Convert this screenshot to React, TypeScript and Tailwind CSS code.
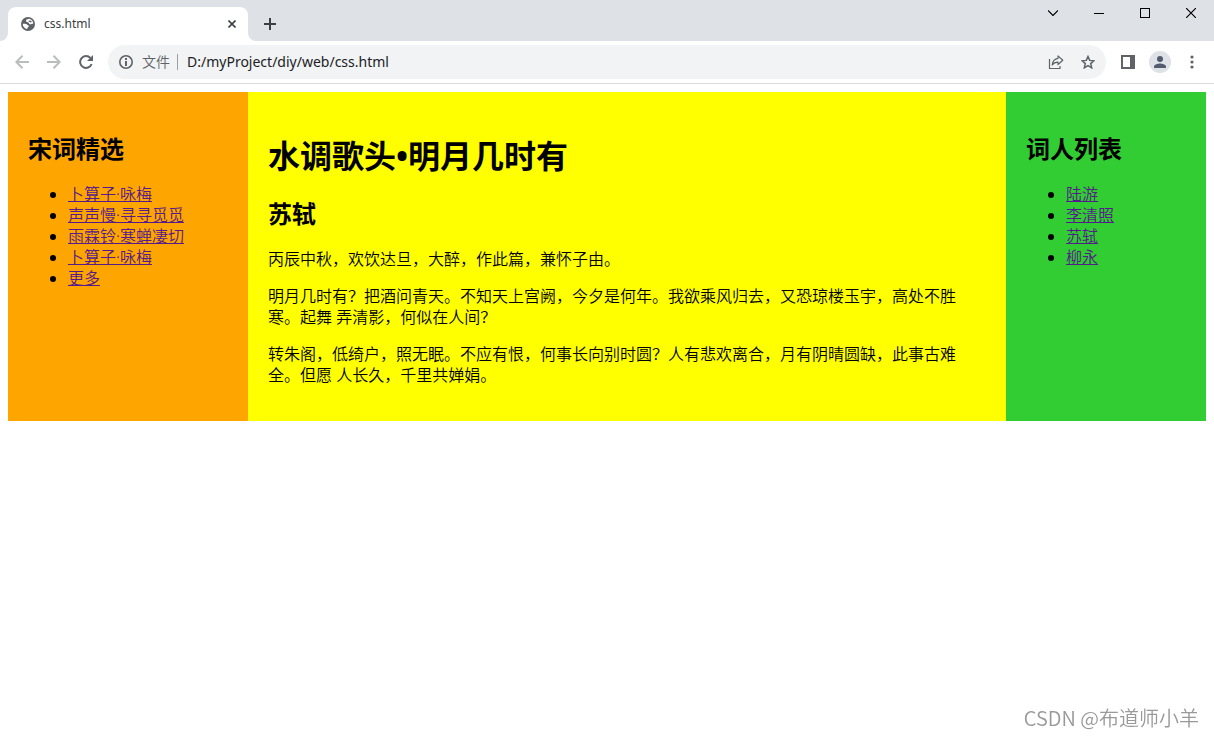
import React from "react";

const poems = [
  "卜算子·咏梅",
  "声声慢·寻寻觅觅",
  "雨霖铃·寒蝉凄切",
  "卜算子·咏梅",
  "更多",
];

const poets = ["陆游", "李清照", "苏轼", "柳永"];

const GlobeIcon = () => (
  <svg viewBox="0 0 14 14" className="size-[14px] shrink-0" aria-hidden="true">
    <circle cx="7" cy="7" r="7" fill="#5f6368" />
    <path
      d="M8.500 1.800C6 2 4.800 3 5 4.200c.3 1.200 1.800.7 2.500 1.300.8.700.2 1.500 1.500 1.800 1.300.2 1.800-.8 3.300-.5-.1-2.600-1.700-4.400-3.800-5z"
      fill="#fff"
    />
    <path
      d="M1.700 6.800c1.600-.2 3.500-.1 4.200.6.700.8 1.800.4 1.900 1.500.1 1.200-1.400 1.200-1.700 3.200-2.500-.4-4.400-2.500-4.400-5.300z"
      fill="#fff"
    />
    <path d="M8.800 3.600c-1 .1-1.500.5-1 .9.700.4 1 .9 1.700 1 .6.100 1-.3 1.300-.8-.5-.6-1.200-1-2-1.100z" fill="#5f6368" />
  </svg>
);

const BackIcon = () => (
  <svg viewBox="0 0 14 14" className="size-[14px]" fill="none" stroke="currentColor" strokeWidth="2">
    <path d="M14 7H1.500M7.500.7L1.300 7l6.200 6.300" />
  </svg>
);

const ForwardIcon = () => (
  <svg viewBox="0 0 14 14" className="size-[14px]" fill="none" stroke="currentColor" strokeWidth="2">
    <path d="M0 7h12.500M6.500.7L12.700 7l-6.200 6.300" />
  </svg>
);

const ReloadIcon = () => (
  <svg viewBox="0 0 14 14" className="size-[14px]" aria-hidden="true">
    <path
      d="M12.600 9A5.900 5.900 0 1 1 11.400 3"
      fill="none"
      stroke="currentColor"
      strokeWidth="2"
    />
    <path d="M14 0v6H8z" fill="currentColor" />
  </svg>
);

const InfoIcon = () => (
  <svg viewBox="0 0 14 14" className="size-[14px] shrink-0" aria-hidden="true">
    <circle cx="7" cy="7" r="6.200" fill="none" stroke="currentColor" strokeWidth="1.600" />
    <path d="M6 6h2v5H6zM6 3h2v2H6z" fill="currentColor" />
  </svg>
);

const ShareIcon = () => (
  <svg
    viewBox="0 0 16 16"
    className="size-4"
    fill="none"
    stroke="currentColor"
    strokeWidth="1.2"
    aria-hidden="true"
  >
    <path d="M1.500 5v9.500h10.500v-2.500" />
    <path
      d="M10 1.900l4.800 4.300L10 10.500V8.100c-2.700 0-4.500.8-5.800 2.900C4.500 7.600 6.300 4.800 10 4.300z"
      strokeLinejoin="round"
    />
  </svg>
);

const StarIcon = () => (
  <svg viewBox="0 0 14 14" className="size-[14px]" fill="none" stroke="currentColor" strokeWidth="1.500">
    <path d="M7 1.500l1.700 3.900 4.200.4-3.200 2.800 1 4.200L7 10.600l-3.700 2.200 1-4.200L1.100 5.800l4.200-.4z" />
  </svg>
);

const TabStrip = () => (
  <div className="flex h-[41px] items-end bg-[#dee1e6]">
    <div className="h-2 w-2 bg-white">
      <div className="h-2 w-2 rounded-br-lg bg-[#dee1e6]" />
    </div>
    <div className="flex h-[34px] w-60 items-center rounded-t-lg bg-white pr-2 pl-[13px]">
      <GlobeIcon />
      <span className="ml-[9px] flex-1 text-[12px] text-[#3c4043]">css.html</span>
      <button
        type="button"
        aria-label="关闭标签页"
        className="flex size-4 items-center justify-center"
      >
        <svg viewBox="0 0 8 8" className="size-2" stroke="#3c4043" strokeWidth="1.600">
          <path d="M.5.5l7 7M7.500.5l-7 7" />
        </svg>
      </button>
    </div>
    <div className="h-2 w-2 bg-white">
      <div className="h-2 w-2 rounded-bl-lg bg-[#dee1e6]" />
    </div>
    <button
      type="button"
      aria-label="新标签页"
      className="flex h-[34px] w-7 items-center justify-center"
    >
      <svg viewBox="0 0 12 12" className="size-3" stroke="#3c4043" strokeWidth="2">
        <path d="M6 0v12M0 6h12" />
      </svg>
    </button>
    <div className="ml-auto flex self-start text-black">
      <button
        type="button"
        aria-label="搜索标签页"
        className="flex h-[26px] w-[46px] items-center justify-center"
      >
        <svg viewBox="0 0 10 6" className="h-[6px] w-[10px]" fill="none" stroke="currentColor" strokeWidth="1.200">
          <path d="M0 .5l5 5 5-5" />
        </svg>
      </button>
      <button
        type="button"
        aria-label="最小化"
        className="flex h-[26px] w-[46px] items-center justify-center"
      >
        <span className="h-px w-[10px] bg-black" />
      </button>
      <button
        type="button"
        aria-label="最大化"
        className="flex h-[26px] w-[46px] items-center justify-center"
      >
        <span className="size-[10px] border border-black" />
      </button>
      <button
        type="button"
        aria-label="关闭"
        className="flex h-[26px] w-[46px] items-center justify-center"
      >
        <svg viewBox="0 0 10 10" className="size-[10px]" stroke="currentColor" strokeWidth="1.200">
          <path d="M0 0l10 10M10 0L0 10" />
        </svg>
      </button>
    </div>
  </div>
);

const Toolbar = () => (
  <div className="flex h-[43px] items-center border-b border-[#dadce0] bg-white px-[6px] text-[#5f6368]">
    <button type="button" aria-label="后退" className="flex w-8 justify-center text-[#babcbe]">
      <BackIcon />
    </button>
    <button type="button" aria-label="前进" className="flex w-8 justify-center text-[#babcbe]">
      <ForwardIcon />
    </button>
    <button type="button" aria-label="重新加载" className="flex w-8 justify-center">
      <ReloadIcon />
    </button>

    <div className="mx-[6px] flex h-[34px] flex-1 items-center rounded-full bg-[#f1f3f4] pr-[2px] pl-[11px]">
      <InfoIcon />
      <label htmlFor="address" className="ml-[9px] text-[14px] leading-5 font-[350]">
        文件
      </label>
      <span className="mx-[7px] h-4 w-px bg-[#9aa0a6]" />
      <input
        id="address"
        type="text"
        className="h-6 flex-1 bg-transparent pb-[2px] pl-[2px] text-[14px] text-[#202124] outline-none"
        value="D:/myProject/diy/web/css.html"
        readOnly={true}
      />
      <button type="button" aria-label="分享" className="flex w-8 justify-center">
        <ShareIcon />
      </button>
      <button type="button" aria-label="收藏" className="flex w-8 justify-center">
        <StarIcon />
      </button>
    </div>

    <button type="button" aria-label="侧边栏" className="flex w-8 justify-center">
      <svg viewBox="0 0 14 14" className="size-[14px]" fill="currentColor">
        <path d="M0 0h14v14H0zM2 2v10h7V2z" fillRule="evenodd" />
      </svg>
    </button>
    <button type="button" aria-label="用户" className="flex w-8 justify-center">
      <span className="flex size-[22px] items-center justify-center rounded-full bg-[#dee1e6] text-[#525c6e]">
        <svg viewBox="0 0 12 12" className="size-3" fill="currentColor">
          <circle cx="6" cy="3" r="3" />
          <path d="M0 12v-1.500C0 8.500 4 7.500 6 7.500s6 1 6 3V12z" />
        </svg>
      </span>
    </button>
    <button type="button" aria-label="更多" className="flex w-8 justify-center">
      <svg viewBox="0 0 4 14" className="h-[14px] w-1" fill="currentColor">
        <circle cx="2" cy="2" r="1.600" />
        <circle cx="2" cy="7" r="1.600" />
        <circle cx="2" cy="12" r="1.600" />
      </svg>
    </button>
  </div>
);

interface LinkListProps {
  title: string;
  items: string[];
}

const LinkList: React.FC<LinkListProps> = ({ title, items }) => (
  <>
    <h2 className="my-5 text-2xl leading-[31px] font-bold">{title}</h2>
    <ul className="my-4 list-disc pl-10">
      {items.map((item, index) => (
        <li key={index}>
          <a href="#" className="text-[#551a8b] underline">
            {item}
          </a>
        </li>
      ))}
    </ul>
  </>
);

const App: React.FC = () => {
  return (
    <div className="min-h-screen bg-white">
      <header className="font-['Noto_Sans','Noto_Sans_CJK_SC',sans-serif]">
        <TabStrip />
        <Toolbar />
      </header>

      <div
        lang="zh-CN"
        className="flex p-2 font-['Noto_Sans','Noto_Sans_CJK_SC',sans-serif] text-base leading-[21px] font-[350] text-black"
      >
        <aside className="flow-root w-60 shrink-0 bg-[#ffa500] px-5 pt-[21px] pb-[19px]">
          <LinkList title="宋词精选" items={poems} />
        </aside>

        <main className="flow-root min-w-0 flex-1 bg-[#ffff00] px-5 pt-[21px] pb-[19px]">
          <h1 className="my-[21px] text-[32px] leading-[43px] font-bold">水调歌头•明月几时有</h1>
          <h2 className="my-5 text-2xl leading-[31px] font-bold">苏轼</h2>
          <p className="my-4">丙辰中秋，欢饮达旦，大醉，作此篇，兼怀子由。</p>
          <p className="my-4">
            明月几时有？把酒问青天。不知天上宫阙，今夕是何年。我欲乘风归去，又恐琼楼玉宇，高处不胜寒。起舞
            弄清影，何似在人间？
          </p>
          <p className="my-4">
            转朱阁，低绮户，照无眠。不应有恨，何事长向别时圆？人有悲欢离合，月有阴晴圆缺，此事古难全。但愿
            人长久，千里共婵娟。
          </p>
        </main>

        <aside className="flow-root w-[200px] shrink-0 bg-[#32cd32] px-5 pt-[21px] pb-[19px]">
          <LinkList title="词人列表" items={poets} />
        </aside>
      </div>

      <div className="fixed right-[15px] bottom-1 font-['Noto_Sans_CJK_SC',sans-serif] text-[20px] leading-[30px] font-[350] text-[#999999]">
        CSDN @布道师小羊
      </div>
    </div>
  );
};

export default App;
